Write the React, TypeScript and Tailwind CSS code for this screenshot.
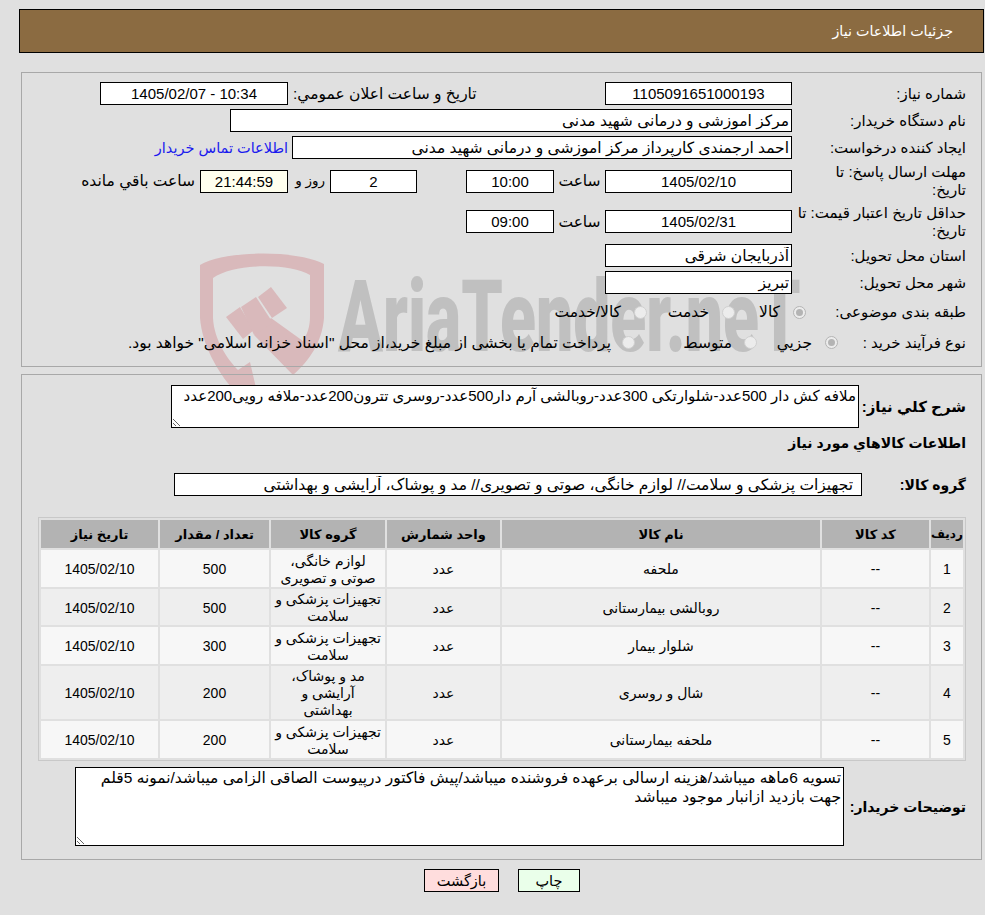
import React from 'react';

const items = [
  { id: 1, name: 'ملحفه', group: 'لوازم خانگی،\nصوتی و تصویری', qty: 500, h: 'h-[37px]' },
  { id: 2, name: 'روبالشی بیمارستانی', group: 'تجهیزات پزشکی و\nسلامت', qty: 500, h: 'h-[36px]' },
  { id: 3, name: 'شلوار بیمار', group: 'تجهیزات پزشکی و\nسلامت', qty: 300, h: 'h-[37px]' },
  { id: 4, name: 'شال و روسری', group: 'مد و پوشاک،\nآرایشی و\nبهداشتی', qty: 200, h: 'h-[53px]' },
  { id: 5, name: 'ملحفه بیمارستانی', group: 'تجهیزات پزشکی و\nسلامت', qty: 200, h: 'h-[37px]' },
];

const Field = ({ value, className = '' }: { value: string; className?: string }) => (
  <input
    readOnly
    value={value}
    className={`h-[23px] shrink-0 border border-black bg-white px-[2px] text-black outline-none ${className}`}
  />
);

const Radio = ({ checked = false }: { checked?: boolean }) => (
  <span
    className={`flex h-[13px] w-[13px] shrink-0 items-center justify-center rounded-full border ${
      checked ? 'border-[#b4b4b4] bg-[#ececec]' : 'border-[#d0d0d0] bg-[#ececec]'
    }`}
  >
    {checked && <span className="h-[7px] w-[7px] rounded-full bg-[#b4b4b4]" />}
  </span>
);

const Watermark = () => (
  <div className="absolute left-0 top-0 h-[400px] w-[810px] overflow-hidden">
    <svg className="absolute left-0 top-0" width="810" height="400" viewBox="0 0 810 400">
      <g fill="#d9b9bb">
        <path d="M200,265 C225,250 298,250 324,264 L324,318 C322,342 310,360 293,375 L254,335 L271,318 L303,341 C307,334 310,328 310,316 L310,275 C290,263 235,263 213,278 L213,318 C214,340 228,360 238,370 L250,362 L256,388 L232,388 C218,372 202,345 200,318 Z" />
        <path d="M226,317 L240,307 L254,330 L243,339 Z" />
        <path d="M241,307 L256,297 L273,323 L254,335 Z" />
        <path d="M258,297 L271,287 L287,308 L272,318 Z" />
      </g>
    </svg>
    <div className="absolute left-[338px] top-[252px] origin-left scale-x-[.66] whitespace-nowrap font-['Roboto',sans-serif] text-[100px] font-black leading-[130px] text-[#c0c0c0]">
      AriaTender.neT
    </div>
  </div>
);

export default function App() {
  return (
    <div
      dir="rtl"
      className="relative h-[915px] w-[985px] overflow-hidden bg-[#e0e0e0] pt-[9px] font-['Liberation_Sans','DejaVu_Sans',sans-serif] text-[15.5px] leading-[18px] text-black"
    >
      <Watermark />

      <div className="relative">
        {/* Title bar */}
        <div className="ml-[19px] mr-[1px] flex h-[44px] items-center border border-black bg-[#8b6b41] pr-[30px] text-[14.3px] text-white">
          جزئیات اطلاعات نیاز
        </div>

        {/* Need details */}
        <div className="ml-[21px] mr-[3px] mt-[19px] flex h-[295px] flex-col gap-1 border border-[#a8a8a8] pr-[15px] pt-[9px]">
          <div className="flex h-[23px] items-center">
            <div className="w-[174px] shrink-0 text-[15px]">شماره نياز:</div>
            <Field value="1105091651000193" className="w-[187px] text-center text-[15px]" />
            <div className="w-[317px] shrink-0 pl-[5px] text-left">تاریخ و ساعت اعلان عمومي:</div>
            <Field value="10:34 - 1405/02/07" className="w-[188px] text-center text-[15px]" />
          </div>
          <div className="flex h-[23px] items-center">
            <div className="w-[174px] shrink-0 text-[15px]">نام دستگاه خريدار:</div>
            <Field value="مرکز اموزشی و درمانی شهید مدنی" className="w-[562px]" />
          </div>
          <div className="flex h-[23px] items-center">
            <div className="w-[174px] shrink-0 text-[15px]">ایجاد کننده درخواست:</div>
            <Field value="احمد ارجمندی کارپرداز مرکز اموزشی و درمانی شهید مدنی" className="w-[500px]" />
            <a className="mr-[4px] text-[14.5px] text-[#1a1aee]">اطلاعات تماس خریدار</a>
          </div>
          <div className="flex h-[36px] items-center">
            <div className="w-[174px] shrink-0 text-[15px]">مهلت ارسال پاسخ: تا<br />تاریخ:</div>
            <Field value="1405/02/10" className="w-[187px] text-center text-[15px]" />
            <div className="w-[51px] shrink-0 text-center">ساعت</div>
            <Field value="10:00" className="w-[88px] text-center text-[15px]" />
            <div className="w-[49px] shrink-0" />
            <Field value="2" className="w-[87px] text-center text-[15px]" />
            <div className="w-[42px] shrink-0 whitespace-nowrap pr-[5px] text-[13.5px]">روز و</div>
            <Field value="21:44:59" className="w-[88px] !bg-[#ffffee] text-center text-[15px]" />
            <div className="mr-[5px]">ساعت باقي مانده</div>
          </div>
          <div className="flex h-[37px] items-center">
            <div className="w-[174px] shrink-0 text-[15px]">حداقل تاریخ اعتبار قیمت: تا<br />تاریخ:</div>
            <Field value="1405/02/31" className="w-[187px] text-center text-[15px]" />
            <div className="w-[51px] shrink-0 text-center">ساعت</div>
            <Field value="09:00" className="w-[88px] text-center text-[15px]" />
          </div>
          <div className="flex h-[23px] items-center">
            <div className="w-[174px] shrink-0 text-[15px]">استان محل تحویل:</div>
            <Field value="آذربایجان شرقی" className="w-[187px]" />
          </div>
          <div className="flex h-[23px] items-center">
            <div className="w-[174px] shrink-0 text-[15px]">شهر محل تحویل:</div>
            <Field value="تبریز" className="w-[187px]" />
          </div>
          <div className="flex h-[28px] items-center">
            <div className="w-[160px] shrink-0 text-[15px]">طبقه بندی موضوعی:</div>
            <div className="flex w-[71px] shrink-0 items-center gap-[13px]"><Radio checked />کالا</div>
            <div className="flex w-[88px] shrink-0 items-center gap-[13px]"><Radio />خدمت</div>
            <div className="flex items-center gap-[13px]"><Radio />کالا/خدمت</div>
          </div>
          <div className="flex h-[25px] items-center">
            <div className="w-[128px] shrink-0 text-[15px]">نوع فرآیند خرید :</div>
            <div className="flex w-[81px] shrink-0 items-center gap-[13px]"><Radio checked />جزيي</div>
            <div className="flex w-[122px] shrink-0 items-center gap-[12px]"><Radio />متوسط</div>
            <div className="flex items-center gap-[11px] whitespace-nowrap"><Radio />پرداخت تمام یا بخشی از مبلغ خرید،از محل "اسناد خزانه اسلامی" خواهد بود.</div>
          </div>
        </div>

        {/* Goods */}
        <div className="ml-[21px] mr-[3px] mt-[7px] h-[486px] border border-[#a8a8a8] pr-[15px] pt-[10px]">
          <div className="flex h-[43px] items-center">
            <div className="w-[107px] shrink-0 text-[15px] font-bold">شرح کلي نياز:</div>
            <textarea
              readOnly
              className="h-[43px] w-[688px] border border-black bg-white px-[2px] text-[15px] leading-[19px] outline-none"
              value="ملافه کش دار 500عدد-شلوارتکی 300عدد-روبالشی آرم دار500عدد-روسری تترون200عدد-ملافه رویی200عدد"
            />
          </div>
          <div className="mt-[6px] h-[18px] text-[14px] font-bold">اطلاعات کالاهاي مورد نياز</div>
          <div className="mt-[21px] flex h-[23px] items-center">
            <div className="w-[104px] shrink-0 text-[14px] font-bold">گروه کالا:</div>
            <Field
              value="تجهیزات پزشکی و سلامت// لوازم خانگی، صوتی و تصویری// مد و پوشاک، آرایشی و بهداشتی"
              className="w-[688px] pr-[8px]"
            />
          </div>

          <table className="mt-[21px] w-[928px] table-fixed border-separate border-spacing-[2px] border border-[#c8c8c8] text-center text-[14px] leading-[17px]">
            <thead>
              <tr className="h-[28px] bg-[#b3b3b3] text-[13px] font-bold">
                <th className="w-[32px] text-[12px] font-bold">رديف</th>
                <th className="w-[107px] font-bold">کد کالا</th>
                <th className="w-[318px] font-bold">نام کالا</th>
                <th className="w-[113px] font-bold">واحد شمارش</th>
                <th className="w-[114px] font-bold">گروه کالا</th>
                <th className="w-[109px] font-bold">تعداد / مقدار</th>
                <th className="w-[117px] font-bold">تاریخ نیاز</th>
              </tr>
            </thead>
            <tbody>
              {items.map((row, i) => (
                <tr key={row.id} className={`${row.h} ${i % 2 === 0 ? 'bg-[#f7f7f7]' : 'bg-[#eeeeee]'}`}>
                  <td className="pt-[2px]">{row.id}</td>
                  <td className="pt-[2px]">--</td>
                  <td className="pt-[2px]">{row.name}</td>
                  <td className="pt-[2px]">عدد</td>
                  <td className="whitespace-pre-line pt-[2px]">{row.group}</td>
                  <td className="pt-[2px]">{row.qty}</td>
                  <td className="pt-[2px]">1405/02/10</td>
                </tr>
              ))}
            </tbody>
          </table>

          <div className="mt-[6px] flex items-center">
            <div className="w-[122px] shrink-0 whitespace-nowrap text-[14px] font-bold">توضیحات خریدار:</div>
            <textarea
              readOnly
              className="h-[79px] w-[769px] border border-black bg-white px-[2px] leading-[19px] outline-none"
              value="تسویه 6ماهه میباشد/هزینه ارسالی برعهده فروشنده میباشد/پیش فاکتور درپیوست الصاقی الزامی میباشد/نمونه 5قلم جهت بازدید ازانبار موجود میباشد"
            />
          </div>
        </div>

        {/* Actions */}
        <div className="mr-[405px] mt-[9px] flex gap-[19px] text-[14.5px]">
          <button className="h-[23px] w-[62px] border border-black bg-[#eaffea]">چاپ</button>
          <button className="h-[23px] w-[75px] border border-black bg-[#ffdddd]">بازگشت</button>
        </div>
      </div>
    </div>
  );
}
